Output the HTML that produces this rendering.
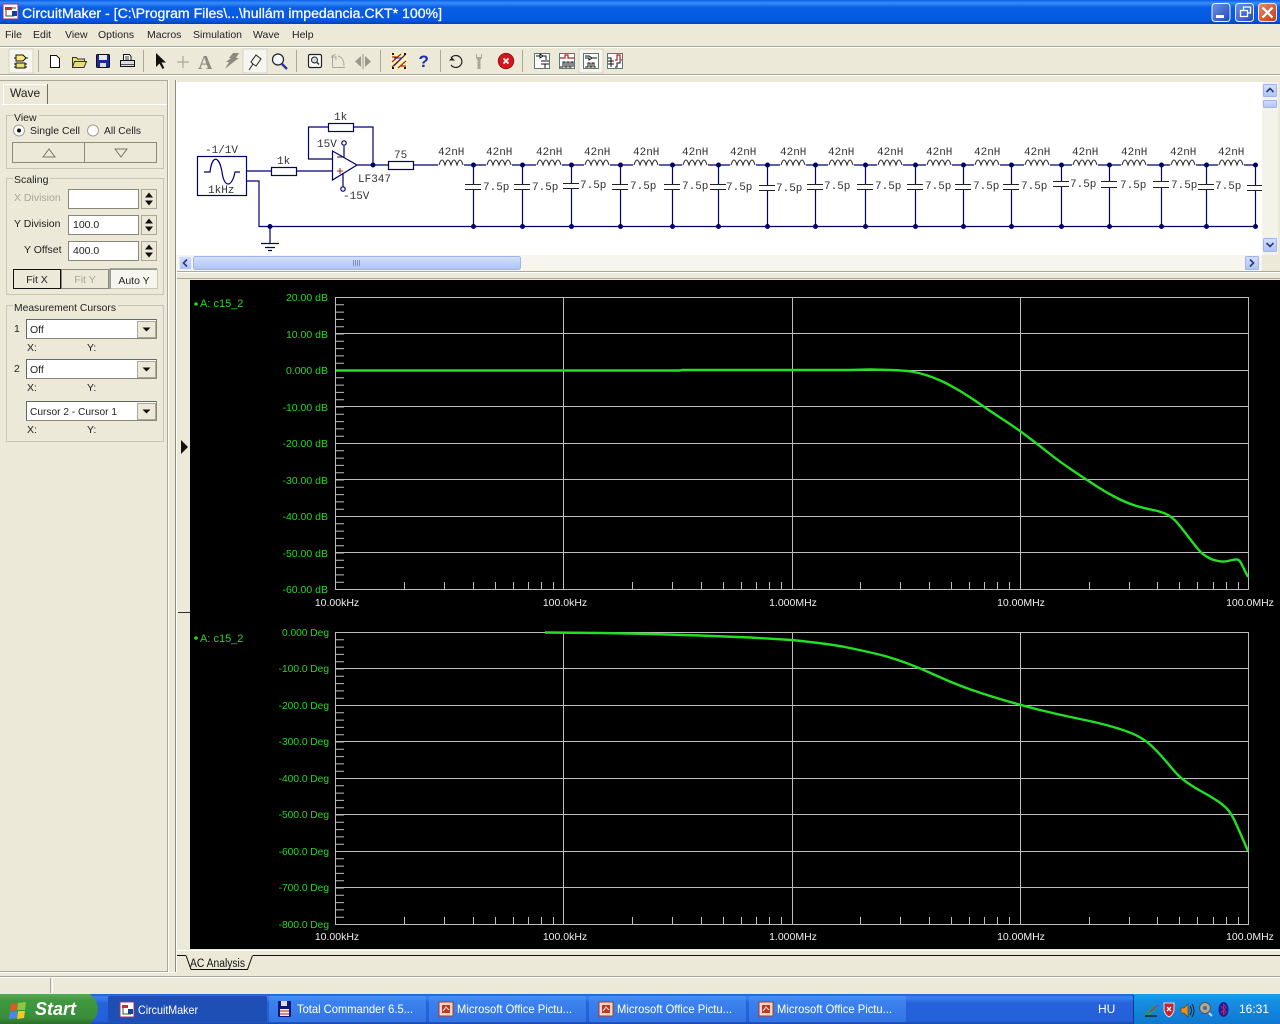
<!DOCTYPE html>
<html><head><meta charset="utf-8"><title>CircuitMaker</title>
<style>html,body{margin:0;padding:0;background:#ece9d8;overflow:hidden}svg{display:block}
text{font-family:"Liberation Sans",sans-serif}
.m{font-size:10.5px;fill:#222}
.p{font-size:10.5px;fill:#222}
.s{font-family:"Liberation Mono",monospace;font-size:11px;fill:#333}
.g{font-size:10.5px;fill:#22d822;text-anchor:end}
.d{font-size:10.2px;fill:#22d822;text-anchor:end}
.w{font-size:10.5px;fill:#eee;text-anchor:middle}
.t{font-size:12px;fill:#fff}
</style></head><body>
<svg width="1280" height="1024" viewBox="0 0 1280 1024" xmlns="http://www.w3.org/2000/svg">
<defs>
<linearGradient id="tb" x1="0" y1="0" x2="0" y2="1"><stop offset="0" stop-color="#0a5fe8"/><stop offset=".12" stop-color="#3a8cf8"/><stop offset=".3" stop-color="#0860e6"/><stop offset=".85" stop-color="#0457e0"/><stop offset="1" stop-color="#0340b8"/></linearGradient>
<linearGradient id="task" x1="0" y1="0" x2="0" y2="1"><stop offset="0" stop-color="#1f60d8"/><stop offset=".12" stop-color="#3a84ee"/><stop offset=".3" stop-color="#2562dc"/><stop offset=".9" stop-color="#2460d8"/><stop offset="1" stop-color="#1a48a8"/></linearGradient>
<linearGradient id="tk" x1="0" y1="0" x2="0" y2="1"><stop offset="0" stop-color="#4a90f0"/><stop offset=".2" stop-color="#3c82ee"/><stop offset="1" stop-color="#3474e4"/></linearGradient>
<linearGradient id="tray" x1="0" y1="0" x2="0" y2="1"><stop offset="0" stop-color="#14a0ea"/><stop offset=".2" stop-color="#1790e4"/><stop offset="1" stop-color="#0f78d0"/></linearGradient>
<linearGradient id="st" x1="0" y1="0" x2="0" y2="1"><stop offset="0" stop-color="#5aa85a"/><stop offset=".2" stop-color="#3f9a3f"/><stop offset=".8" stop-color="#3a8c3a"/><stop offset="1" stop-color="#2a6e2a"/></linearGradient>
<linearGradient id="wb" x1="0" y1="0" x2="1" y2="1"><stop offset="0" stop-color="#6d94e8"/><stop offset="1" stop-color="#1f47b8"/></linearGradient>
<linearGradient id="wr" x1="0" y1="0" x2="1" y2="1"><stop offset="0" stop-color="#e88a6c"/><stop offset="1" stop-color="#c4381a"/></linearGradient>
<linearGradient id="sb" x1="0" y1="0" x2="0" y2="1"><stop offset="0" stop-color="#d4e0fa"/><stop offset="1" stop-color="#aec4f2"/></linearGradient>
<g id="L"><rect x="-13" y="-9" width="26" height="10" fill="#fff"/><path d="M-12 0q3-10 6 0q3-10 6 0q3-10 6 0q3-10 6 0" fill="none" stroke="#222" stroke-width="1"/></g>
<g id="sp"><rect x="0" y="0" width="15" height="19" fill="#ece9d8" stroke="#aca899"/><path d="M7.5 3l4 5h-8zM7.5 16l4-5h-8z" fill="#111"/></g>
<g id="cb"><rect x="0" y="0" width="130" height="19" fill="#fff" stroke="#8a8778"/><path d="M0 19V0H130" fill="none" stroke="#666"/><rect x="111" y="2" width="18" height="16" fill="#ece9d8" stroke="#aca899"/><path d="M116 8h8l-4 4z" fill="#111"/></g>
</defs>

<rect width="1280" height="1024" fill="#ece9d8"/>

<!-- title bar -->
<rect width="1280" height="24" fill="url(#tb)"/>
<g><rect x="3" y="4" width="15" height="15" fill="#fff" stroke="#a03070"/><path d="M5 7h7v3H5z" fill="#c03030"/><path d="M6 10v6h8M12 8h4" stroke="#206020" fill="none"/><rect x="12" y="11" width="5" height="5" fill="#1040a0"/></g>
<text x="22" y="18" font-size="13.5" fill="#fff" textLength="420" lengthAdjust="spacingAndGlyphs" style="stroke:#fff;stroke-width:.25">CircuitMaker - [C:\Program Files\...\hullám impedancia.CKT* 100%]</text>
<rect x="1212" y="3.500" width="18" height="18" rx="3" fill="url(#wb)" stroke="#e8eefc"/><rect x="1216" y="15" width="8" height="3" fill="#fff"/>
<rect x="1235.500" y="3.500" width="18" height="18" rx="3" fill="url(#wb)" stroke="#e8eefc"/><path d="M1240.500 10.500h7v6h-7zM1243.500 10v-3h7v6h-3" fill="none" stroke="#fff" stroke-width="1.300"/>
<rect x="1258.500" y="3.500" width="18" height="18" rx="3" fill="url(#wr)" stroke="#f0e8e4"/><path d="M1262.500 7.500l10 10M1272.500 7.500l-10 10" stroke="#fff" stroke-width="2.200"/>

<!-- menu -->
<text class="m" x="5" y="38">File</text><text class="m" x="33" y="38">Edit</text><text class="m" x="65" y="38">View</text><text class="m" x="98" y="38">Options</text><text class="m" x="147" y="38">Macros</text><text class="m" x="193" y="38">Simulation</text><text class="m" x="253" y="38">Wave</text><text class="m" x="292" y="38">Help</text>
<path d="M0 46.500H1280" stroke="#aca899"/><path d="M0 47.500H1280" stroke="#fff"/>
<path d="M0 74.500H1280" stroke="#aca899"/><path d="M0 75.500H1280" stroke="#fff"/>

<!-- toolbar -->
<g stroke="#aca899">
<path d="M38.500 50v22M143.500 50v22M296.500 50v22M380.500 50v22M440.500 50v22M522.500 50v22"/>
</g>
<rect x="9" y="49" width="24" height="24" fill="#f6f5ee" stroke="#d8d5c6"/>
<rect x="243" y="49" width="24" height="24" fill="#f6f5ee" stroke="#d8d5c6"/>
<rect x="579" y="49" width="24" height="24" fill="#f6f5ee" stroke="#d8d5c6"/>
<path d="M16 55h7l3 3-3 3h-7z" fill="#ffe87a" stroke="#111"/><rect x="16" y="63" width="9" height="5" fill="#e8e070" stroke="#111"/><path d="M14 58h2M14 64h2M14 67h2M25 64h2M25 67h2M26 58h2" stroke="#111"/>
<path d="M50.500 55.500h6l3 3v9h-9z" fill="#fff" stroke="#111"/><path d="M49 55l-1-1M60 57l2-1M49 67l-1 1" stroke="#ece060"/>
<path d="M72.500 67.500v-10h4l1 1.500h7v2" fill="#e8dc80" stroke="#333"/><path d="M72.500 67.500l2-6h12l-2.500 6z" fill="#e8dc80" stroke="#333"/>
<rect x="96.500" y="54.500" width="13" height="13" rx="1" fill="#1a2a9a" stroke="#111"/><rect x="99" y="55" width="8" height="5" fill="#e8e8f0"/><rect x="100" y="63" width="6" height="4" fill="#ddd"/>
<path d="M123.500 54.500h6l1.500 2v4h-7.500z" fill="#fff" stroke="#111"/><rect x="120.500" y="60.500" width="14" height="6" fill="#ddd" stroke="#111"/><path d="M121 64.500h13" stroke="#555"/><path d="M125 57h4M125 59h4" stroke="#333"/>
<path d="M156 53v14l3.500-3.500 3 5.500 1.800-1-2.800-5.500h4.500z" fill="#111"/>
<path d="M183 56v12M177 62h12" stroke="#aaa89c" stroke-width="1.200"/>
<text x="198" y="69" style="font-family:'Liberation Serif',serif;font-size:20px;fill:#8d8b80;font-weight:bold">A</text>
<path d="M233 53h6l-3 5h3l-8 6-6 5 4-7h-3l5-4h-2z" fill="#8d8b80"/>
<path d="M249 70l4-6M253 64l-2-2 5-7 5 4-5 7z" fill="none" stroke="#222"/>
<circle cx="278" cy="59.500" r="5.500" fill="#f4f8ff" stroke="#222" stroke-width="1.200"/><path d="M282 64l5 5" stroke="#223a9a" stroke-width="2.400"/>
<rect x="308.500" y="54.500" width="13" height="13" rx="1.500" fill="#fff" stroke="#222" stroke-width="1.200"/><circle cx="314.500" cy="60" r="3" fill="#cfe0e0" stroke="#222"/><path d="M317 62.500l2 2" stroke="#222" stroke-width="1.400"/>
<path d="M332.500 67.500v-12l3-1M332.500 67.500h12.500M338 56c4 1 6 5 6 10" fill="none" stroke="#aaa89c"/><path d="M331 57h5v3" fill="none" stroke="#aaa89c"/>
<path d="M361 56l-6 5.500 6 5.500zM365 56l6 5.500-6 5.500z" fill="#9a988c"/><path d="M363 54v15" stroke="#9a988c"/>
<rect x="391" y="53" width="16" height="16" fill="#fdf6b0"/><path d="M392 67l14-13M392 62l9-8M398 68l8-7M392 57h5M401 66h5" stroke="#b02020" stroke-width="1.200"/><path d="M394 66l10-10M394 58l8 0" stroke="#2030a0"/><path d="M392 54h2M404 54h2M392 68h2M404 68h2" stroke="#111" stroke-width="2"/>
<text x="418.500" y="67" style="font-size:17px;font-weight:bold;fill:#1a2ea8">?</text>
<path d="M451 58a6 6 0 1 1 0 7" fill="none" stroke="#222" stroke-width="1.200"/><path d="M449 60.500h6l-3-3z" fill="#222"/>
<path d="M476 54v4l1.500 2v9h3v-9l1.500-2v-4l-1 0v3h-4v-3z" fill="#a8a698"/>
<circle cx="506" cy="61" r="7.800" fill="#d8141c" stroke="#701010" stroke-width=".7"/><path d="M503.500 58.500l5 5M508.500 58.500l-5 5" stroke="#fff" stroke-width="1.800"/>
<rect x="534.500" y="53.500" width="15" height="15" fill="#fff" stroke="#5a7a70"/><path d="M536 56h4v-2l3 2-3 2v-2M543 56h3v4M541 61h8M541 64h8M545 64v4" fill="none" stroke="#111"/>
<rect x="559.500" y="53.500" width="15" height="15" fill="#fff" stroke="#5a7a70"/><path d="M560 58h5v-3h3v3h6" fill="none" stroke="#b02020" stroke-width="1.200"/><path d="M560 67h3v-5h2v5h2v-5h2v5h2v-5h2v5" fill="none" stroke="#111"/>
<rect x="583.500" y="53.500" width="15" height="15" fill="#fff" stroke="#5a7a70"/><path d="M585 56h4l3 2-3 2v-2h-4M592 58h5M585 67h3v-4h2v4h2v-4h2v4h2" fill="none" stroke="#111"/>
<rect x="607.500" y="53.500" width="15" height="15" fill="#fff" stroke="#5a7a70"/><path d="M608 58h3v9M608 61h6M608 64h6" fill="none" stroke="#111"/><path d="M615 60h2v-5h3v5h2" fill="none" stroke="#b02020" stroke-width="1.200"/><path d="M615 67h2v-4h3v-2" fill="none" stroke="#111"/>

<!-- left panel -->
<path d="M0 80.500H168M167.500 80V972M0 971.500H168" stroke="#aca899"/><path d="M168.500 80V972" stroke="#fff"/>
<path d="M1.500 104.500H167" stroke="#fff"/>
<path d="M3.500 104V84.500H47" fill="#ece9d8" stroke="#fff"/><path d="M47.500 84V104" stroke="#716f64"/>
<text class="p" x="10" y="97" style="font-size:12px">Wave</text>
<path d="M6.500 115.500H163.500V168.500H6.500Z" fill="none" stroke="#c8c5b4"/><rect x="13" y="112" width="26" height="10" fill="#ece9d8"/>
<text class="p" x="14" y="121">View</text>
<circle cx="19" cy="130.500" r="5.500" fill="#fff" stroke="#a09e90"/><circle cx="19" cy="130.500" r="2" fill="#111"/>
<text class="p" x="30" y="134" textLength="50" lengthAdjust="spacingAndGlyphs">Single Cell</text>
<circle cx="93" cy="130.500" r="5.500" fill="#fff" stroke="#a09e90"/>
<text class="p" x="104" y="134" textLength="37" lengthAdjust="spacingAndGlyphs">All Cells</text>
<rect x="12.500" y="142.500" width="72" height="20" fill="#ece9d8" stroke="#8d8b80"/><rect x="84.500" y="142.500" width="72" height="20" fill="#ece9d8" stroke="#8d8b80"/>
<path d="M43 157l6-8 6 8z" fill="none" stroke="#7a786c"/><path d="M115 149l6 8 6-8z" fill="none" stroke="#7a786c"/>

<path d="M6.500 178.500H163.500V294.500H6.500Z" fill="none" stroke="#c8c5b4"/><rect x="13" y="175" width="37" height="10" fill="#ece9d8"/>
<text class="p" x="14" y="183">Scaling</text>
<text class="p" x="14" y="201" style="fill:#a8a698">X Division</text>
<text class="p" x="14" y="227">Y Division</text>
<text class="p" x="24" y="253">Y Offset</text>
<rect x="68.500" y="189.500" width="70" height="19" fill="#fff" stroke="#8a8778"/><rect x="68.500" y="215.500" width="70" height="19" fill="#fff" stroke="#8a8778"/><rect x="68.500" y="241.500" width="70" height="19" fill="#fff" stroke="#8a8778"/>
<text class="p" x="73" y="228">100.0</text><text class="p" x="73" y="254">400.0</text>
<use href="#sp" x="141.500" y="189.500"/><use href="#sp" x="141.500" y="215.500"/><use href="#sp" x="141.500" y="241.500"/>
<rect x="13.500" y="269.500" width="47" height="19" fill="#ece9d8" stroke="#111"/>
<rect x="61.500" y="269.500" width="47" height="19" fill="#ece9d8" stroke="#8d8b80"/>
<rect x="110.500" y="269.500" width="47" height="19" fill="#f6f5ee" stroke="#c8c5b4"/><path d="M110 289V269H157" stroke="#666" fill="none"/>
<text class="p" x="37" y="283" text-anchor="middle">Fit X</text>
<text class="p" x="85" y="283" text-anchor="middle" style="fill:#a8a698">Fit Y</text>
<text class="p" x="134" y="284" text-anchor="middle">Auto Y</text>

<path d="M6.500 305.500H163.500V441.500H6.500Z" fill="none" stroke="#c8c5b4"/><rect x="13" y="302" width="105" height="10" fill="#ece9d8"/>
<text class="p" x="14" y="311" textLength="102" lengthAdjust="spacingAndGlyphs">Measurement Cursors</text>
<text class="p" x="14" y="332">1</text><use href="#cb" x="26.500" y="319.500"/><text class="p" x="30" y="333">Off</text>
<text class="p" x="27" y="351">X:</text><text class="p" x="87" y="351">Y:</text>
<text class="p" x="14" y="372">2</text><use href="#cb" x="26.500" y="359.500"/><text class="p" x="30" y="373">Off</text>
<text class="p" x="27" y="391">X:</text><text class="p" x="87" y="391">Y:</text>
<use href="#cb" x="26.500" y="401.500"/><text class="p" x="30" y="415" textLength="87" lengthAdjust="spacingAndGlyphs">Cursor 2 - Cursor 1</text>
<text class="p" x="27" y="433">X:</text><text class="p" x="87" y="433">Y:</text>

<!-- divider -->
<path d="M175.500 80V972" stroke="#8d8b80"/>
<path d="M176.500 80V972" stroke="#fff"/>

<!-- schematic -->
<rect x="177" y="82" width="1085" height="173" fill="#fff"/>
<g fill="none" stroke="#000070" stroke-width="1.200">
<rect x="197.500" y="156.500" width="49" height="39"/>
<path d="M246 171H271M296 171H332M246 181H259V226.500H1258M270 226.500V243"/>
<path d="M332 159H308.500V127H328M353 127H373V165"/>
<path d="M332.500 151V180L357 165Z" fill="#fff"/>
<path d="M357 165H388M413 165H1258"/>
<path d="M344 157V146M343 173V187"/>
<path d="M204 172H210C212 155 219 155 222 172C224 188 232 188 235 172H240"/>
<path d="M261 243.500H279M265 247.500H275M268 250.500H272"/>
<rect x="271.500" y="167.500" width="25" height="8" fill="#fff"/>
<rect x="328.500" y="123.500" width="25" height="8" fill="#fff"/>
<rect x="388.500" y="161.500" width="25" height="8" fill="#fff"/>
<circle cx="344" cy="143" r="2.200" fill="#fff"/><circle cx="343" cy="189" r="2.200" fill="#fff"/>
</g>
<path d="M337 157h6" stroke="#222"/><path d="M337 171h6M340 168v6" stroke="#a02020"/>
<use href="#L" x="451" y="165"/><use href="#L" x="499" y="165"/><use href="#L" x="549" y="165"/><use href="#L" x="597" y="165"/><use href="#L" x="646" y="165"/><use href="#L" x="695" y="165"/><use href="#L" x="743" y="165"/><use href="#L" x="793" y="165"/><use href="#L" x="841" y="165"/><use href="#L" x="890" y="165"/><use href="#L" x="939" y="165"/><use href="#L" x="987" y="165"/><use href="#L" x="1037" y="165"/><use href="#L" x="1085" y="165"/><use href="#L" x="1134" y="165"/><use href="#L" x="1183" y="165"/><use href="#L" x="1231" y="165"/>
<path fill="none" stroke="#000070" stroke-width="1.200" d="M473.500 165V184M473.500 189V226M522.500 165V184M522.500 189V226M571.500 165V183M571.500 188V226M620.500 165V184M620.500 189V226M672.500 165V184M672.500 189V226M718.500 165V184M718.500 189V226M767.500 165V185M767.500 190V226M815.500 165V184M815.500 189V226M865.500 165V184M865.500 189V226M915.500 165V184M915.500 189V226M963.500 165V184M963.500 189V226M1011.500 165V184M1011.500 189V226M1061.500 165V181M1061.500 186V226M1109.500 165V181M1109.500 187V226M1161.500 165V181M1161.500 187V226M1206.500 165V184M1206.500 189V226M1255.500 165V185M1255.500 190V226"/>
<path fill="none" stroke="#222" d="M465 184.500h16M465 189.500h16M514 184.500h16M514 189.500h16M563 183.500h16M563 188.500h16M612 184.500h16M612 189.500h16M664 184.500h16M664 189.500h16M710 184.500h16M710 189.500h16M759 185.500h16M759 190.500h16M807 184.500h16M807 189.500h16M857 184.500h16M857 189.500h16M907 184.500h16M907 189.500h16M955 184.500h16M955 189.500h16M1003 184.500h16M1003 189.500h16M1053 181.500h16M1053 186.500h16M1101 181.500h16M1101 187.500h16M1153 181.500h16M1153 187.500h16M1198 184.500h16M1198 189.500h16M1247 185.500h16M1247 190.500h16"/>
<path fill="none" stroke="#000060" stroke-width="5" stroke-linecap="round" d="M270 226.500h0M373 165h0M473.500 165h0M473.500 226.500h0M522.500 165h0M522.500 226.500h0M571.500 165h0M571.500 226.500h0M620.500 165h0M620.500 226.500h0M672.500 165h0M672.500 226.500h0M718.500 165h0M718.500 226.500h0M767.500 165h0M767.500 226.500h0M815.500 165h0M815.500 226.500h0M865.500 165h0M865.500 226.500h0M915.500 165h0M915.500 226.500h0M963.500 165h0M963.500 226.500h0M1011.500 165h0M1011.500 226.500h0M1061.500 165h0M1061.500 226.500h0M1109.500 165h0M1109.500 226.500h0M1161.500 165h0M1161.500 226.500h0M1206.500 165h0M1206.500 226.500h0M1255.500 165h0M1255.500 226.500h0"/>
<text class="s" x="205" y="153">-1/1V</text><text class="s" x="208" y="193">1kHz</text>
<text class="s" x="277" y="164">1k</text><text class="s" x="334" y="120">1k</text><text class="s" x="317" y="147">15V</text>
<text class="s" x="358" y="182">LF347</text><text class="s" x="343" y="199">-15V</text><text class="s" x="394" y="158">75</text>
<text class="s" x="438" y="155">42nH</text><text class="s" x="486" y="155">42nH</text><text class="s" x="536" y="155">42nH</text><text class="s" x="584" y="155">42nH</text><text class="s" x="633" y="155">42nH</text><text class="s" x="682" y="155">42nH</text><text class="s" x="730" y="155">42nH</text><text class="s" x="780" y="155">42nH</text><text class="s" x="828" y="155">42nH</text><text class="s" x="877" y="155">42nH</text><text class="s" x="926" y="155">42nH</text><text class="s" x="974" y="155">42nH</text><text class="s" x="1024" y="155">42nH</text><text class="s" x="1072" y="155">42nH</text><text class="s" x="1121" y="155">42nH</text><text class="s" x="1170" y="155">42nH</text><text class="s" x="1218" y="155">42nH</text>
<text class="s" x="483" y="190">7.5p</text><text class="s" x="532" y="190">7.5p</text><text class="s" x="580" y="188">7.5p</text><text class="s" x="630" y="189">7.5p</text><text class="s" x="682" y="189">7.5p</text><text class="s" x="726" y="190">7.5p</text><text class="s" x="776" y="191">7.5p</text><text class="s" x="824" y="189">7.5p</text><text class="s" x="875" y="189">7.5p</text><text class="s" x="925" y="189">7.5p</text><text class="s" x="973" y="189">7.5p</text><text class="s" x="1021" y="189">7.5p</text><text class="s" x="1070" y="187">7.5p</text><text class="s" x="1120" y="188">7.5p</text><text class="s" x="1171" y="188">7.5p</text><text class="s" x="1215" y="189">7.5p</text>

<!-- scrollbars -->
<rect x="177" y="255" width="1085" height="16" fill="#f6f5ee"/>
<rect x="1262" y="82" width="16" height="173" fill="#f4f3ea"/>
<rect x="179.500" y="256.500" width="12" height="13" rx="1" fill="url(#sb)" stroke="#e8eefc"/><path d="M187 259.500l-3.500 3.500 3.500 3.500" fill="none" stroke="#2a3a7a" stroke-width="1.600"/>
<rect x="193.500" y="256.500" width="327" height="13" rx="2" fill="url(#sb)" stroke="#9fb4e8"/><path d="M353.500 260v6M355.500 260v6M357.500 260v6M359.500 260v6" stroke="#7a90c8"/>
<rect x="1245.500" y="256.500" width="13" height="13" rx="1" fill="url(#sb)" stroke="#9fb4e8"/><path d="M1250 259.500l3.500 3.500-3.500 3.500" fill="none" stroke="#2a3a7a" stroke-width="1.600"/>
<rect x="1263.500" y="84.500" width="13" height="12" rx="1" fill="url(#sb)" stroke="#9fb4e8"/><path d="M1266.500 92l3.500-3.500 3.500 3.500" fill="none" stroke="#2a3a7a" stroke-width="1.600"/>
<rect x="1263.500" y="100.500" width="13" height="7" rx="1" fill="url(#sb)" stroke="#9fb4e8"/>
<rect x="1263.500" y="238.500" width="13" height="13" rx="1" fill="url(#sb)" stroke="#9fb4e8"/><path d="M1266.500 243l3.500 3.500 3.500-3.500" fill="none" stroke="#2a3a7a" stroke-width="1.600"/>
<path d="M177 271.500H1280" stroke="#aca899"/><path d="M177 272.500H1280" stroke="#fff"/>
<path d="M177 278.500H1280" stroke="#aca899"/><rect x="177" y="279" width="13" height="670" fill="#ece9d8"/>

<!-- plots -->
<rect x="190" y="280" width="1090" height="669" fill="#000"/>
<path d="M178 612.500H190" stroke="#333"/><path d="M181 440v14l7-7z" fill="#111"/>
<g fill="none" stroke="#bdbdbd">
<path d="M335.500 297.500H1248.500V589.500H335.500ZM335.500 333.500H1248.500M335.500 370.500H1248.500M335.500 406.500H1248.500M335.500 443.500H1248.500M335.500 479.500H1248.500M335.500 516.500H1248.500M335.500 552.500H1248.500M563.500 297V589M792.500 297V589M1020.500 297V589"/>
<path d="M335.500 632.500H1248.500V924.500H335.500ZM335.500 668.500H1248.500M335.500 705.500H1248.500M335.500 741.500H1248.500M335.500 778.500H1248.500M335.500 814.500H1248.500M335.500 851.500H1248.500M335.500 887.500H1248.500M563.500 632V924M792.500 632V924M1020.500 632V924"/>
<path d="M340 297V589M340 632V924" stroke-width="8" stroke-dasharray="1 6.300"/>
<path d="M404.500 582v7M444.500 582v7M473.500 582v7M495.500 582v7M513.500 582v7M528.500 582v7M541.500 582v7M553.500 582v7M632.500 582v7M672.500 582v7M701.500 582v7M723.500 582v7M741.500 582v7M756.500 582v7M769.500 582v7M781.500 582v7M860.500 582v7M900.500 582v7M929.500 582v7M951.500 582v7M969.500 582v7M984.500 582v7M997.500 582v7M1009.500 582v7M1089.500 582v7M1129.500 582v7M1157.500 582v7M1179.500 582v7M1197.500 582v7M1213.500 582v7M1226.500 582v7M1238.500 582v7"/>
<path d="M404.500 917v7M444.500 917v7M473.500 917v7M495.500 917v7M513.500 917v7M528.500 917v7M541.500 917v7M553.500 917v7M632.500 917v7M672.500 917v7M701.500 917v7M723.500 917v7M741.500 917v7M756.500 917v7M769.500 917v7M781.500 917v7M860.500 917v7M900.500 917v7M929.500 917v7M951.500 917v7M969.500 917v7M984.500 917v7M997.500 917v7M1009.500 917v7M1089.500 917v7M1129.500 917v7M1157.500 917v7M1179.500 917v7M1197.500 917v7M1213.500 917v7M1226.500 917v7M1238.500 917v7"/>
</g>
<path fill="none" stroke="#22e022" stroke-width="2.400" stroke-linejoin="round" d="M336 370.500H680L682 370H850L870 369.500L890 370Q905 370.500 912.500 371.750Q920 373 927.500 375.500Q935 378 942.500 381.500Q950 385 960 391Q970 397 980 404Q990 411 1000 417.500Q1010 424 1015 427.500Q1020 431 1030 438.500Q1040 446 1050 454Q1060 462 1073.500 471Q1087 480 1097 486.500Q1107 493 1117 498Q1127 503 1135 505.500Q1143 508 1153 510Q1163 512 1168 515Q1173 518 1176.500 522Q1180 526 1183.500 530.500Q1187 535 1193.500 543.500Q1200 552 1203.500 554.500Q1207 557 1210 558.500Q1213 560 1218 561Q1223 562 1226.500 561.250Q1230 560.500 1233.500 559.750Q1237 559 1238.500 560Q1240 561 1241.500 564Q1243 567 1248 577"/>
<path fill="none" stroke="#22e022" stroke-width="2.400" stroke-linejoin="round" d="M545 632.500L600 633L650 634L700 635.500L750 637.500L792 640Q830 644 845 647Q860 650 875 653.500Q890 657 905 662.500Q920 668 935 675Q950 682 965 687.500Q980 693 1000 699Q1020 705 1040 710Q1060 715 1080 719Q1100 723 1115 727.500Q1130 732 1137.500 736Q1145 740 1150 744.500Q1155 749 1160 754.500Q1165 760 1170 766Q1175 772 1178.500 775.500Q1182 779 1188.500 783.500Q1195 788 1202.500 792Q1210 796 1217.500 801Q1225 806 1228.500 810.500Q1232 815 1235 821.500Q1238 828 1248 851"/>
<circle cx="196" cy="304" r="1.800" fill="#22d822"/><text x="200" y="307" font-size="11" fill="#22d822">A: c15_2</text>
<circle cx="196" cy="638" r="1.800" fill="#22d822"/><text x="200" y="642" font-size="11" fill="#22d822">A: c15_2</text>
<text class="g" x="328" y="301">20.00 dB</text><text class="g" x="328" y="338">10.00 dB</text><text class="g" x="328" y="374">0.000 dB</text><text class="g" x="328" y="411">-10.00 dB</text><text class="g" x="328" y="447">-20.00 dB</text><text class="g" x="328" y="484">-30.00 dB</text><text class="g" x="328" y="520">-40.00 dB</text><text class="g" x="328" y="557">-50.00 dB</text><text class="g" x="328" y="593">-60.00 dB</text>
<text class="d" x="329" y="636">0.000 Deg</text><text class="d" x="329" y="672">-100.0 Deg</text><text class="d" x="329" y="709">-200.0 Deg</text><text class="d" x="329" y="745">-300.0 Deg</text><text class="d" x="329" y="782">-400.0 Deg</text><text class="d" x="329" y="818">-500.0 Deg</text><text class="d" x="329" y="855">-600.0 Deg</text><text class="d" x="329" y="891">-700.0 Deg</text><text class="d" x="329" y="928">-800.0 Deg</text>
<text class="w" x="337" y="606">10.00kHz</text><text class="w" x="565" y="606">100.0kHz</text><text class="w" x="793" y="606">1.000MHz</text><text class="w" x="1021" y="606">10.00MHz</text><text class="w" x="1250" y="606">100.0MHz</text>
<text class="w" x="337" y="940">10.00kHz</text><text class="w" x="565" y="940">100.0kHz</text><text class="w" x="793" y="940">1.000MHz</text><text class="w" x="1021" y="940">10.00MHz</text><text class="w" x="1250" y="940">100.0MHz</text>

<!-- tabs -->
<path d="M177 950.500H1280" stroke="#fff"/>
<path d="M177 955.500H186M253 955.500H1280" stroke="#111"/>
<path d="M186 955.500L191 969.500H247.500L252.500 955.500" fill="#ece9d8" stroke="#111"/>
<text x="190" y="967" font-size="11.500" fill="#111" textLength="55" lengthAdjust="spacingAndGlyphs">AC Analysis</text>

<!-- status -->
<path d="M0 972.500H176" stroke="#fff"/>
<path d="M0 976.500H1280" stroke="#aca899"/><path d="M0 977.500H1280" stroke="#fff"/>
<path d="M50.500 978V993" stroke="#aca899"/><path d="M52.500 978V993" stroke="#fff"/>

<!-- taskbar -->
<rect y="994" width="1280" height="30" fill="url(#task)"/>
<rect x="1133" y="994" width="147" height="30" fill="url(#tray)"/><path d="M1133.500 995V1024" stroke="#0d3a90"/>
<path d="M0 994H90Q98 1002 98 1009T90 1024H0Z" fill="url(#st)"/>
<path d="M11 1004l6-1v7l-7 1z" fill="#e0582a"/><path d="M18 1003l8-1-1 8-8 0z" fill="#8cc840"/><path d="M10 1012l7-1v7l-8 1z" fill="#4a88e8"/><path d="M18 1011l7 0-1 7-7 1z" fill="#f0c830"/>
<text x="35" y="1015" font-size="18" font-style="italic" font-weight="bold" fill="#fff">Start</text>
<rect x="108" y="996" width="159" height="26" rx="2" fill="#1e4fb4"/>
<rect x="269" y="996" width="157" height="26" rx="2" fill="url(#tk)"/>
<rect x="429" y="996" width="157" height="26" rx="2" fill="url(#tk)"/>
<rect x="589" y="996" width="157" height="26" rx="2" fill="url(#tk)"/>
<rect x="749" y="996" width="157" height="26" rx="2" fill="url(#tk)"/>
<g><rect x="120" y="1002" width="14" height="15" fill="#fff" stroke="#a03070"/><path d="M122 1005h6v3h-6z" fill="#c03030"/><path d="M123 1008v6h8" stroke="#206020" fill="none"/><rect x="128" y="1009" width="5" height="5" fill="#1040a0"/></g>
<text class="t" x="138" y="1014" textLength="60" lengthAdjust="spacingAndGlyphs">CircuitMaker</text>
<rect x="278" y="1001" width="13" height="16" rx="1" fill="#101878"/><rect x="280" y="1009" width="9" height="7" fill="#f0f0f0"/><path d="M280 1011h9M280 1014h9" stroke="#c02020"/><rect x="281" y="1001" width="6" height="5" fill="#ddd"/>
<text class="t" x="297" y="1013" textLength="116" lengthAdjust="spacingAndGlyphs">Total Commander 6.5...</text>
<rect x="439" y="1002" width="14" height="14" fill="#f0d8c8" stroke="#b03a20"/><rect x="442" y="1005" width="8" height="8" fill="#c03820"/><path d="M443 1011l3-4 3 3" stroke="#fff" fill="none"/>
<text class="t" x="457" y="1013" textLength="115" lengthAdjust="spacingAndGlyphs">Microsoft Office Pictu...</text>
<rect x="599" y="1002" width="14" height="14" fill="#f0d8c8" stroke="#b03a20"/><rect x="602" y="1005" width="8" height="8" fill="#c03820"/><path d="M603 1011l3-4 3 3" stroke="#fff" fill="none"/>
<text class="t" x="617" y="1013" textLength="115" lengthAdjust="spacingAndGlyphs">Microsoft Office Pictu...</text>
<rect x="759" y="1002" width="14" height="14" fill="#f0d8c8" stroke="#b03a20"/><rect x="762" y="1005" width="8" height="8" fill="#c03820"/><path d="M763 1011l3-4 3 3" stroke="#fff" fill="none"/>
<text class="t" x="777" y="1013" textLength="115" lengthAdjust="spacingAndGlyphs">Microsoft Office Pictu...</text>
<text class="t" x="1098" y="1013">HU</text>
<!-- tray -->
<path d="M1145 1015l8-9 3 2-8 7zM1148 1016l9-9" stroke="#30a030" fill="none"/><path d="M1145 1016h12" stroke="#222" stroke-width="1.500"/><path d="M1150 1012l8-7" stroke="#c02080"/>
<path d="M1164 1003h10v7q-1 5-5 7q-4-2-5-7z" fill="#c82030" stroke="#e8d8d8"/><path d="M1167 1007l4 4M1171 1007l-4 4" stroke="#fff" stroke-width="1.300"/>
<path d="M1181 1008h3l4-4v13l-4-4h-3z" fill="#e89020" stroke="#603010" stroke-width=".6"/><path d="M1190 1006q3 4.500 0 9M1192 1004q4 6.500 0 13" stroke="#222" fill="none"/>
<circle cx="1205" cy="1008" r="5.500" fill="#a8a8a0" stroke="#555"/><circle cx="1205" cy="1008" r="2" fill="#666"/><path d="M1209 1013l3 3" stroke="#c8d0e0" stroke-width="2"/>
<ellipse cx="1223.500" cy="1009.500" rx="5" ry="7.500" fill="#1020a8"/><path d="M1221 1006l5 6-2.500 2.500v-10l2.500 2.500-5 6" stroke="#d02040" fill="none"/>
<text class="t" x="1239" y="1013">16:31</text>
</svg>
</body></html>
